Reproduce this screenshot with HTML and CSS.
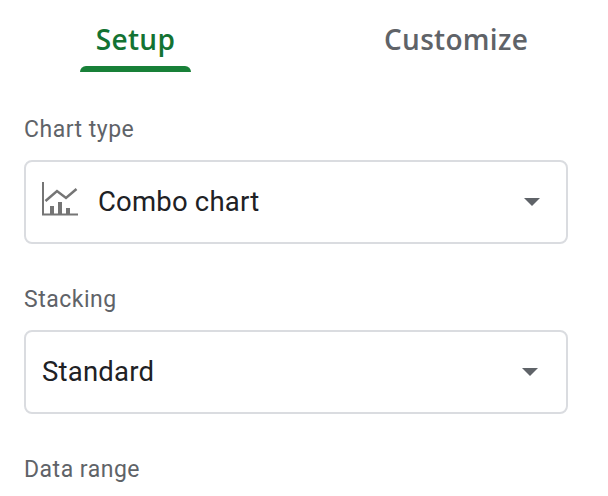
FILE: index.html
```html
<!DOCTYPE html>
<html lang="en">
<head>
    <meta charset="UTF-8" />
    <title>Chart editor</title>
    <link rel="stylesheet" href="styles.css">
</head>
<body>
    <div class="tabs">
        <div class="tab active">Setup</div>
        <div class="tab">Customize</div>
    </div>

    <div class="field first">
        <div class="field-label">Chart type</div>
        <div class="select">
            <svg class="chart-icon" width="38" height="36" viewBox="0 0 38 36" fill="none">
                <path d="M1 1V33.500H36" stroke="#757575" stroke-width="2"/>
                <path d="M3.500 20L15 10L24 17L34.500 8" stroke="#757575" stroke-width="2.500"/>
                <path d="M8 25h4v8H8zM16 21h4v12h-4zM24 27h4v6h-4z" fill="#757575"/>
            </svg>
            <span class="select-text">Combo chart</span>
            <span class="arrow arrow-shifted"></span>
        </div>
    </div>

    <div class="field">
        <div class="field-label">Stacking</div>
        <div class="select">
            <span class="select-text">Standard</span>
            <span class="arrow"></span>
        </div>
    </div>

    <div class="field">
        <div class="field-label">Data range</div>
    </div>
</body>
</html>
```

FILE: styles.css
```css
body {
    margin: 0;
    padding: 0 40px 0 24px;
    height: 496px;
    box-sizing: border-box;
    overflow: hidden;
    background-color: #fff;
    font-family: Roboto, "Liberation Sans", sans-serif;
}

.tabs {
    display: flex;
    height: 72px;
}

.tab {
    font-family: "Open Sans", Roboto, sans-serif;
    font-size: 28px;
    font-weight: 600;
    letter-spacing: 0.3px;
    color: #5f6368;
    line-height: 78px;
    margin-left: 193px;
}

.tab.active {
    position: relative;
    width: 111px;
    margin-left: 56px;
    text-align: center;
    color: #137333;
}

.tab.active::after {
    content: "";
    position: absolute;
    left: 0;
    right: 0;
    bottom: 0;
    height: 6px;
    border-radius: 6px 6px 0 0;
    background-color: #188038;
}

.field {
    margin-top: 41px;
}

.field.first {
    margin-top: 43px;
}

.field-label {
    font-size: 23px;
    letter-spacing: 0.5px;
    line-height: 30px;
    color: #5f6368;
    margin-bottom: 15px;
}

.select {
    display: flex;
    align-items: center;
    width: 544px;
    height: 84px;
    box-sizing: border-box;
    padding: 0 28px 0 16px;
    border: 2px solid #dadce0;
    border-radius: 8px;
}

.chart-icon {
    margin-right: 18px;
    margin-bottom: 6px;
}

.select-text {
    flex: 1;
    padding-bottom: 2px;
    font-size: 27.500px;
    letter-spacing: 0.2px;
    color: #202124;
}

.arrow {
    width: 0;
    height: 0;
    border-left: 8px solid transparent;
    border-right: 8px solid transparent;
    border-top: 8px solid #5f6368;
}

.arrow-shifted {
    margin-right: -2px;
}
```
